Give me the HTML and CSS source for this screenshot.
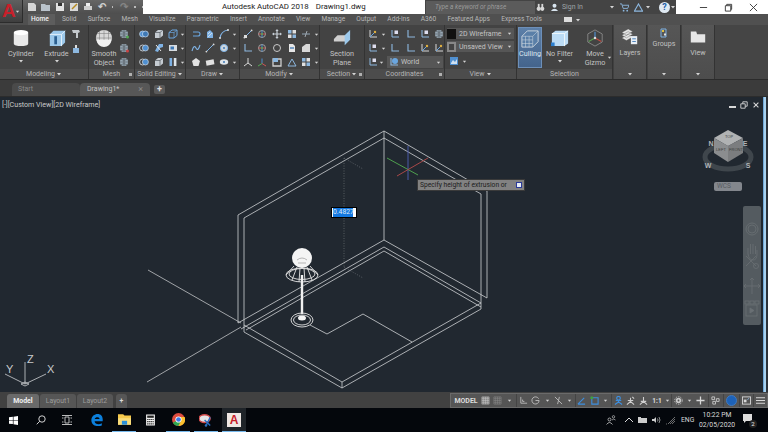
FILE: index.html
```html
<!DOCTYPE html>
<html lang="en">
<head>
<meta charset="utf-8">
<title>Autodesk AutoCAD 2018</title>
<link rel="stylesheet" href="styles.css">
</head>
<body>
<svg class="defs" width="0" height="0">
  <symbol id="globe" viewBox="0 0 10 10"><circle cx="5" cy="5" r="4" fill="#9fb0bd"/><path d="M1 5h8M5 1v8M2 2.5q3 1.5 6 0M2 7.5q3-1.5 6 0" stroke="#4a5158" stroke-width=".7" fill="none"/></symbol>
  <symbol id="rings" viewBox="0 0 10 10"><circle cx="3.6" cy="5" r="3" fill="#4f8fd0" stroke="#cfe0f0" stroke-width=".7"/><circle cx="6.4" cy="5" r="3" fill="#3f79b5" stroke="#cfe0f0" stroke-width=".7"/></symbol>
  <symbol id="ringsw" viewBox="0 0 10 10"><circle cx="3.6" cy="5" r="3" fill="none" stroke="#cfd6dc" stroke-width=".9"/><circle cx="6.4" cy="5" r="3" fill="#4f8fd0" stroke="#cfd6dc" stroke-width=".7"/></symbol>
  <symbol id="cube" viewBox="0 0 10 10"><path d="M1 3.5 4 1h5v5.5L6 9H1z" fill="#c6ccd2"/><path d="M1 3.5h5V9M6 3.5 9 1" stroke="#3d4348" stroke-width=".6" fill="none"/></symbol>
  <symbol id="cubeb" viewBox="0 0 10 10"><path d="M1 3.5 4 1h5v5.5L6 9H1z" fill="none" stroke="#6aa6e0"/><path d="M1 3.5h5V9M6 3.5 9 1" stroke="#6aa6e0" stroke-width=".7" fill="none"/></symbol>
  <symbol id="tool" viewBox="0 0 10 10"><path d="M5 1h4v3L6 5 4 9 1 8l2-4z" fill="#7fb2e4"/><path d="M2 2l5 6" stroke="#e8e8e8"/></symbol>
  <symbol id="panel" viewBox="0 0 10 10"><rect x="1" y="2" width="8" height="6" fill="#d8dde2"/><rect x="2.5" y="3.5" width="3.5" height="3" fill="#3f79b5"/></symbol>
  <symbol id="bars" viewBox="0 0 10 10"><rect x="1.5" y="1" width="2.6" height="8" fill="#7fb2e4"/><rect x="5.8" y="1" width="2.6" height="8" fill="#dfe5ea"/></symbol>
  <symbol id="chev" viewBox="0 0 10 10"><path d="M2 3h5a2 2 0 0 1 0 4H2" fill="none" stroke="#6aa6e0" stroke-width="1.1"/></symbol>
  <symbol id="hatch" viewBox="0 0 10 10"><path d="M2 9V3l3-2 3 3v5z" fill="#7fb2e4"/><path d="M3 8l4-4M3 5l2-2" stroke="#eee" stroke-width=".7"/></symbol>
  <symbol id="arc" viewBox="0 0 10 10"><path d="M1 9Q2 2 9 1" fill="none" stroke="#7fb2e4" stroke-width="1.1"/><circle cx="1" cy="9" r="1" fill="#ddd"/><circle cx="9" cy="1" r="1" fill="#ddd"/></symbol>
  <symbol id="spline" viewBox="0 0 10 10"><path d="M1 8Q3 1 5 5T9 2" fill="none" stroke="#7fb2e4" stroke-width="1.1"/></symbol>
  <symbol id="line" viewBox="0 0 10 10"><path d="M1 9 9 1" stroke="#7fb2e4" stroke-width="1"/><circle cx="1.4" cy="8.6" r=".9" fill="#ddd"/><circle cx="8.6" cy="1.4" r=".9" fill="#ddd"/></symbol>
  <symbol id="circ" viewBox="0 0 10 10"><circle cx="5" cy="5" r="3.6" fill="#cdd6dd" stroke="#7fb2e4"/><circle cx="5" cy="5" r="1" fill="#3f79b5"/></symbol>
  <symbol id="pent" viewBox="0 0 10 10"><path d="M5 1l4 3-1.5 5h-5L1 4z" fill="#e2e2e2"/></symbol>
  <symbol id="rect" viewBox="0 0 10 10"><path d="M1 3h8v5H1z" fill="#e2e2e2" transform="rotate(-10 5 5)"/></symbol>
  <symbol id="ell" viewBox="0 0 10 10"><ellipse cx="5" cy="5" rx="4.2" ry="2.8" fill="#dfe5ea"/><circle cx="5" cy="5" r="1" fill="#3f79b5"/></symbol>
  <symbol id="move" viewBox="0 0 10 10"><path d="M5 0l1.600 2H5.600v2.400H8V3.400L10 5 8 6.600v-1H5.600V8h1L5 10 3.400 8h1V5.600H2v1L0 5l2-1.600v1h2.400V2h-1z" fill="#c8d0d8"/></symbol>
  <symbol id="gizmo" viewBox="0 0 10 10"><circle cx="5" cy="5" r="3.500" fill="none" stroke="#a0a0a0"/><path d="M5 1.500v7" stroke="#4f8fd0"/><path d="M1.500 5h7" stroke="#c55"/><circle cx="5" cy="5" r="1" fill="#5a5"/></symbol>
  <symbol id="dash" viewBox="0 0 10 10"><path d="M1 5h8" stroke="#7b8a96" stroke-width="1.400"/><path d="M6 2 4 8" stroke="#a0a8b0"/></symbol>
  <symbol id="doc" viewBox="0 0 10 10"><path d="M2 1h4l2 2v6H2z" fill="#e6e6e6"/><path d="M3 5h4" stroke="#3f79b5" stroke-width="1.300"/></symbol>
  <symbol id="tile" viewBox="0 0 10 10"><rect x="1" y="1" width="3.500" height="3.500" fill="#8db8e0"/><rect x="5.500" y="1" width="3.500" height="3.500" fill="#e0e0e0"/><rect x="1" y="5.500" width="3.500" height="3.500" fill="#e0e0e0"/><rect x="5.500" y="5.500" width="3.500" height="3.500" fill="#8db8e0"/></symbol>
  <symbol id="ucs" viewBox="0 0 10 10"><path d="M2 1v7h7" fill="none" stroke="#d8d8d8"/><path d="M2 8 7 3" stroke="#6aa6e0"/><circle cx="7" cy="3" r="1.200" fill="#e0b040"/></symbol>
  <symbol id="ucsb" viewBox="0 0 10 10"><path d="M2 1v7h7" fill="none" stroke="#8db8e0" stroke-width="1.100"/></symbol>
  <symbol id="ucsd" viewBox="0 0 10 10"><path d="M2 1v7h7" fill="none" stroke="#8db8e0"/><rect x="4.500" y="1.500" width="3.500" height="3.500" fill="#dde"/></symbol>
  <symbol id="caret" viewBox="0 0 6 6"><path d="M1 2h4L3 4.500z" fill="#d5d5d5"/></symbol>
</svg>

<div class="app">
  <div class="titlebar">
    <div class="qat">
      <svg class="qat-ico" viewBox="0 0 10 10"><path d="M1 1h6l2 2v6H1z" fill="#d6d6d6"/></svg>
      <svg class="qat-ico" viewBox="0 0 10 10"><path d="M0 2h4l1 1h4v6H0z" fill="#b9c2ca"/></svg>
      <svg class="qat-ico" viewBox="0 0 10 10"><path d="M1 1h8v8H1z" fill="#e2e2e2"/><rect x="3" y="1" width="4" height="3" fill="#333"/></svg>
      <svg class="qat-ico" viewBox="0 0 10 10"><path d="M1 1h8v8H1z" fill="#d9d9d9"/><path d="M3 7l5-5" stroke="#b58a20" stroke-width="1.500"/></svg>
      <svg class="qat-ico" viewBox="0 0 10 10"><path d="M1 4h8v4H1z" fill="#cfcfcf"/><path d="M3 1h4v3H3z" fill="#eee"/></svg>
      <span class="undo">↶</span><span class="dot"></span><span class="undo dim">↷</span><span class="dot"></span><span class="dot"></span>
    </div>
    <div class="title"><span>Autodesk AutoCAD 2018</span><span>Drawing1.dwg</span></div>
    <div class="online">
      <span class="searchbox">Type a keyword or phrase</span>
      <svg class="ol-ico o-bin" viewBox="0 0 10 10"><circle cx="3" cy="6.500" r="2.300" fill="#d8d8d8"/><circle cx="7" cy="6.500" r="2.300" fill="#d8d8d8"/><rect x="2" y="1" width="2" height="4" fill="#d8d8d8"/><rect x="6" y="1" width="2" height="4" fill="#d8d8d8"/></svg>
      <svg class="ol-ico o-user" viewBox="0 0 10 10"><circle cx="5" cy="3" r="2.200" fill="#d8e4ee"/><path d="M1 9q4-5 8 0z" fill="#d8e4ee"/></svg>
      <span class="signin">Sign In</span>
      <svg class="caret c-signin" viewBox="0 0 6 6"><use href="#caret"/></svg>
      <svg class="ol-ico o-cart" viewBox="0 0 10 10"><path d="M0 1h2l1.500 5h5L10 2.500H3" fill="none" stroke="#8db8e0"/><circle cx="4" cy="8.500" r="1" fill="#8db8e0"/><circle cx="8" cy="8.500" r="1" fill="#8db8e0"/></svg>
      <svg class="ol-ico o-tri" viewBox="0 0 10 10"><path d="M5 1 9.500 9H.5z" fill="none" stroke="#8db8e0" stroke-width="1.200"/></svg>
      <svg class="caret c-tri" viewBox="0 0 6 6"><use href="#caret"/></svg>
      <span class="help">?</span>
      <svg class="caret c-help" viewBox="0 0 6 6"><use href="#caret"/></svg>
    </div>
    <div class="winbtns">
      <svg viewBox="0 0 10 10"><path d="M1 5h8" stroke="#333"/></svg>
      <svg viewBox="0 0 10 10"><path d="M1.500 3h6v6h-6zM3 3V1.500h5.500V7H7.500" fill="none" stroke="#333"/></svg>
      <svg viewBox="0 0 10 10"><path d="M1 1l8 8M9 1 1 9" stroke="#333"/></svg>
    </div>
  </div>

  <div class="appbtn">A<svg class="caret" viewBox="0 0 6 6"><use href="#caret"/></svg></div>

  <div class="tabrow">
    <span class="tab active">Home</span><span class="tab">Solid</span><span class="tab">Surface</span><span class="tab">Mesh</span><span class="tab">Visualize</span><span class="tab">Parametric</span><span class="tab">Insert</span><span class="tab">Annotate</span><span class="tab">View</span><span class="tab">Manage</span><span class="tab">Output</span><span class="tab">Add-ins</span><span class="tab">A360</span><span class="tab">Featured Apps</span><span class="tab">Express Tools</span>
    <span class="tab-ico"></span>
    <svg class="caret" viewBox="0 0 6 6"><use href="#caret"/></svg>
  </div>

  <div class="ribbon">
    <section class="panel p-model">
      <div class="pbody">
        <div class="big b-cyl">
          <svg class="bigico" viewBox="0 0 20 20"><path d="M2 4v12c0 4 16 4 16 0V4z" fill="#e9e9e9"/><ellipse cx="10" cy="4" rx="8" ry="3" fill="#fff"/></svg>
          <span>Cylinder</span><svg class="caret" viewBox="0 0 6 6"><use href="#caret"/></svg>
        </div>
        <div class="big b-ext">
          <svg class="bigico" viewBox="0 0 20 20"><path d="M2 6l4-4h13v13l-4 4H2z" fill="#9cc8ea"/><path d="M2 6h13v13M15 6l4-4" stroke="#e8f2fa" fill="none"/><rect x="7" y="8" width="3" height="9" fill="#2b5f90"/></svg>
          <span>Extrude</span><svg class="caret" viewBox="0 0 6 6"><use href="#caret"/></svg>
        </div>
        <div class="stack s-model">
          <svg viewBox="0 0 10 10"><path d="M1 1h7l1 2-2 1v5H5V4H2z" fill="#c4c8cc"/></svg>
          <svg viewBox="0 0 10 10"><path d="M2 4h6v5H2z" fill="#8db8e0"/><path d="M4 1h2v3H4z" fill="#ddd"/></svg>
        </div>
      </div>
      <div class="plabel">Modeling<svg class="caret" viewBox="0 0 6 6"><use href="#caret"/></svg></div>
    </section>

    <section class="panel p-mesh">
      <div class="pbody">
        <div class="big b-smooth">
          <svg class="bigico" viewBox="0 0 20 20"><circle cx="10" cy="10" r="9" fill="#d8d8d8"/><path d="M1 10h18M10 1v18M3 5h14M3 15h14M5 2v16M15 2v16" stroke="#7a7a7a" stroke-width=".6"/><path d="M2 12a8 8 0 0 0 16 0z" fill="#f2f2f2"/></svg>
          <span>Smooth<br>Object</span>
        </div>
        <div class="stack s-mesh">
          <svg viewBox="0 0 10 10"><use href="#globe"/><circle cx="8.500" cy="8" r="1.500" fill="#5a5"/></svg>
          <svg viewBox="0 0 10 10"><use href="#globe"/><circle cx="8.500" cy="8" r="1.500" fill="#c44"/></svg>
          <svg viewBox="0 0 10 10"><use href="#globe"/></svg>
        </div>
      </div>
      <div class="plabel">Mesh<i class="launch"></i></div>
    </section>

    <section class="panel p-solid">
      <div class="pbody">
        <div class="grid g-solid">
          <svg viewBox="0 0 10 10"><use href="#rings"/></svg><svg viewBox="0 0 10 10"><use href="#cube"/></svg><svg viewBox="0 0 10 10"><use href="#cubeb"/></svg><svg class="c" viewBox="0 0 6 6"><use href="#caret"/></svg>
          <svg viewBox="0 0 10 10"><use href="#ringsw"/></svg><svg viewBox="0 0 10 10"><use href="#tool"/></svg><svg viewBox="0 0 10 10"><use href="#panel"/></svg><svg class="c" viewBox="0 0 6 6"><use href="#caret"/></svg>
          <svg viewBox="0 0 10 10"><use href="#ringsw"/></svg><svg viewBox="0 0 10 10"><use href="#cube"/></svg><svg viewBox="0 0 10 10"><use href="#bars"/></svg><svg class="c" viewBox="0 0 6 6"><use href="#caret"/></svg>
        </div>
      </div>
      <div class="plabel">Solid Editing<svg class="caret" viewBox="0 0 6 6"><use href="#caret"/></svg></div>
    </section>

    <section class="panel p-draw">
      <div class="pbody">
        <div class="grid g-draw">
          <svg viewBox="0 0 10 10"><use href="#chev"/></svg><svg viewBox="0 0 10 10"><use href="#hatch"/></svg><svg viewBox="0 0 10 10"><use href="#arc"/></svg><svg class="c" viewBox="0 0 6 6"><use href="#caret"/></svg>
          <svg viewBox="0 0 10 10"><use href="#spline"/></svg><svg viewBox="0 0 10 10"><use href="#line"/></svg><svg viewBox="0 0 10 10"><use href="#circ"/></svg><svg class="c" viewBox="0 0 6 6"><use href="#caret"/></svg>
          <svg viewBox="0 0 10 10"><use href="#pent"/></svg><svg viewBox="0 0 10 10"><use href="#rect"/></svg><svg viewBox="0 0 10 10"><use href="#ell"/></svg><svg class="c" viewBox="0 0 6 6"><use href="#caret"/></svg>
        </div>
      </div>
      <div class="plabel">Draw<svg class="caret" viewBox="0 0 6 6"><use href="#caret"/></svg></div>
    </section>

    <section class="panel p-modify">
      <div class="pbody">
        <div class="grid g-modify">
          <svg viewBox="0 0 10 10"><use href="#line"/><rect x="1" y="6" width="3" height="3" fill="#ddd"/></svg><svg viewBox="0 0 10 10"><use href="#gizmo"/></svg><svg viewBox="0 0 10 10"><use href="#move"/></svg><svg viewBox="0 0 10 10"><use href="#tile"/></svg><svg viewBox="0 0 10 10"><use href="#dash"/></svg><svg class="c" viewBox="0 0 6 6"><use href="#caret"/></svg>
          <svg viewBox="0 0 10 10"><use href="#ucsb"/></svg><svg viewBox="0 0 10 10"><use href="#gizmo"/></svg><svg viewBox="0 0 10 10"><circle cx="5" cy="5" r="3.500" fill="none" stroke="#c8c8c8"/></svg><svg viewBox="0 0 10 10"><use href="#doc"/></svg><svg viewBox="0 0 10 10"><path d="M1 9V4l4-3h4v8z" fill="#d8d8d8"/></svg><svg class="c" viewBox="0 0 6 6"><use href="#caret"/></svg>
          <svg viewBox="0 0 10 10"><path d="M5 1v5M5 6 1 9M5 6l4 3" stroke="#d8d8d8"/></svg><svg viewBox="0 0 10 10"><path d="M5 1.500v5" stroke="#4f8fd0"/><path d="M5 6.500 1 9" stroke="#5a5"/><path d="M5 6.500 9 9" stroke="#c55"/></svg><svg viewBox="0 0 10 10"><path d="M1 2h8v7H1z" fill="none" stroke="#d0d0d0" stroke-width="1.300"/><rect x="1" y="1" width="5" height="4" fill="#8db8e0"/></svg><svg viewBox="0 0 10 10"><path d="M1 9h8L5 2z" fill="none" stroke="#8db8e0"/></svg><svg viewBox="0 0 10 10"><use href="#tile"/></svg><svg class="c" viewBox="0 0 6 6"><use href="#caret"/></svg>
        </div>
      </div>
      <div class="plabel">Modify<svg class="caret" viewBox="0 0 6 6"><use href="#caret"/></svg></div>
    </section>

    <section class="panel p-section">
      <div class="pbody">
        <div class="big b-section">
          <svg class="bigico" viewBox="0 0 20 20"><path d="M1 11l4-4h9v7H1z" fill="#cfcfcf"/><path d="M13 7l6-6v11l-6 6z" fill="#9cc8ea"/></svg>
          <span>Section<br>Plane</span>
        </div>
      </div>
      <div class="plabel">Section<svg class="caret" viewBox="0 0 6 6"><use href="#caret"/></svg><i class="launch"></i></div>
    </section>

    <section class="panel p-coord">
      <div class="pbody">
        <div class="grid g-coord">
          <svg viewBox="0 0 10 10"><use href="#ucs"/></svg><svg class="c" viewBox="0 0 6 6"><use href="#caret"/></svg><svg viewBox="0 0 10 10"><use href="#ucsd"/></svg><svg viewBox="0 0 10 10"><use href="#ucsb"/></svg><svg viewBox="0 0 10 10"><use href="#ucsd"/></svg><svg viewBox="0 0 10 10"><use href="#globe"/></svg>
          <svg viewBox="0 0 10 10"><use href="#ucsd"/></svg><svg class="c" viewBox="0 0 6 6"><use href="#caret"/></svg><svg viewBox="0 0 10 10"><use href="#ucsb"/></svg><svg viewBox="0 0 10 10"><use href="#ucsb"/></svg><svg viewBox="0 0 10 10"><use href="#ucs"/></svg><svg viewBox="0 0 10 10"><use href="#ucs"/></svg>
        </div>
        <div class="coord-last">
          <svg viewBox="0 0 10 10"><use href="#ucsd"/></svg><svg class="c" viewBox="0 0 6 6"><use href="#caret"/></svg>
          <div class="combo c-world"><svg viewBox="0 0 10 10"><use href="#ucsb"/><circle cx="6" cy="4" r="3" fill="#6aa6e0"/></svg><span>World</span><svg class="c" viewBox="0 0 6 6"><use href="#caret"/></svg></div>
        </div>
      </div>
      <div class="plabel">Coordinates<i class="launch"></i></div>
    </section>

    <section class="panel p-view">
      <div class="pbody">
        <div class="combo c-vs"><i class="swatch"></i><span>2D Wireframe</span><svg class="c" viewBox="0 0 6 6"><use href="#caret"/></svg></div>
        <div class="combo c-vs"><i class="swatch sw2"></i><span>Unsaved View</span><svg class="c" viewBox="0 0 6 6"><use href="#caret"/></svg></div>
        <div class="view-last"><svg viewBox="0 0 10 10"><rect x="1" y="1" width="8" height="8" fill="#4f8fd0"/><path d="M2 7l2-3 2 2 2-3v5H2z" fill="#cfe0f0"/></svg><svg class="c" viewBox="0 0 6 6"><use href="#caret"/></svg></div>
      </div>
      <div class="plabel">View<svg class="caret" viewBox="0 0 6 6"><use href="#caret"/></svg></div>
    </section>

    <section class="panel p-select">
      <div class="pbody">
        <div class="big b-cull">
          <svg class="bigico" viewBox="0 0 20 20"><path d="M1 7l6-6h12v12l-6 6H1z" fill="#5a7fa8" stroke="#cfd8e0"/><path d="M1 7h12v12M13 7l6-6M5 7v12M9 7v12M1 11h12M1 15h12" stroke="#cfd8e0" stroke-width=".6" fill="none"/></svg>
          <span>Culling</span>
        </div>
        <div class="big b-filter">
          <svg class="bigico" viewBox="0 0 20 20"><path d="M1 5l4-3h14v14l-4 3H1z" fill="#bcdcf5"/><path d="M1 5h14v14M15 5l4-3" stroke="#f2f8fc" fill="none"/><rect x="0" y="15" width="4" height="4" fill="#2b7fd0"/></svg>
          <span>No Filter</span><svg class="caret" viewBox="0 0 6 6"><use href="#caret"/></svg>
        </div>
        <div class="big b-gizmo">
          <svg class="bigico" viewBox="0 0 20 20"><path d="M10 1l8 4.500v9L10 19l-8-4.500v-9z" fill="none" stroke="#8a8a8a"/><path d="M10 10V3" stroke="#4f8fd0" stroke-width="1.300"/><path d="M10 10 3 14" stroke="#5a9a50" stroke-width="1.300"/><path d="M10 10l7 4" stroke="#c04a40" stroke-width="1.300"/><circle cx="10" cy="10" r="1.400" fill="#ddd"/></svg>
          <span>Move<br>Gizmo</span>
        </div>
        <svg class="c gizmo-caret" viewBox="0 0 6 6"><use href="#caret"/></svg>
      </div>
      <div class="plabel">Selection</div>
    </section>

    <section class="mini m-layers">
      <svg class="miniico" viewBox="0 0 20 20"><path d="M1 5 8 1l5 3-7 4zM1 8l7-4 5 3-7 4zM1 11l7-4 5 3-7 4z" fill="#e4e4e4" stroke="#555" stroke-width=".4"/><rect x="11" y="9" width="7" height="9" fill="#e8eef4"/><path d="M12.500 12h4M12.500 15h4" stroke="#3f79b5"/></svg>
      <span>Layers</span><svg class="caret" viewBox="0 0 6 6"><use href="#caret"/></svg>
    </section>
    <section class="mini m-groups">
      <svg class="miniico small" viewBox="0 0 10 10"><path d="M2 1h5v8H2z" fill="none" stroke="#7fb2e4"/><rect x="3" y="2" width="2" height="2" fill="#e0c040"/><rect x="5" y="5.500" width="2" height="2" fill="#e0e0e0"/></svg>
      <span>Groups</span><svg class="caret" viewBox="0 0 6 6"><use href="#caret"/></svg>
    </section>
    <section class="mini m-view">
      <svg class="miniico" viewBox="0 0 20 20"><path d="M2 4h6l1 3h9v9H2z" fill="#e6e6e6"/></svg>
      <span>View</span><svg class="caret" viewBox="0 0 6 6"><use href="#caret"/></svg>
    </section>
    <div class="ribbon-rest"></div>
  </div>

  <div class="doctabs">
    <span class="doctab start">Start</span>
    <span class="doctab cur">Drawing1*<b>×</b></span>
    <span class="addtab">+</span>
  </div>

  <main class="viewport">
    <div class="vlabel">[-][Custom View][2D Wireframe]</div>
    <svg class="scene" viewBox="0 97 768 295">
      <g class="wire">
        <path d="M384 131 238 215V323M384 138 244 218V332M384 131V240M384 131 487 191V298M384 138 481 194V309"/>
        <path d="M384 240 238 323M384 247 241 329M384 251 246 330M384 240 487 298M384 247 481 303M384 251 481 307"/>
        <path d="M244 325 342 382 481 303M244 332 342 388 481 309M342 382V388"/>
        <path d="M310 325 327 334 363 314 412 342"/>
      </g>
      <g class="axisline">
        <path d="M148 270 241 323M147 382 241 327"/>
      </g>
      <path class="dim" d="M344 158V267M344 158 363 169M344 267 363 278"/>
      <path class="ax-b" d="M408 146V180"/>
      <path class="ax-g" d="M387 158 418 175"/>
      <path class="ax-r" d="M397 176 428 158"/>
      <g class="lamp">
        <ellipse cx="302" cy="275" rx="16" ry="7"/>
        <ellipse cx="302" cy="274" rx="13" ry="5.500"/>
        <path d="M294 266 286 275M310 266 318 275M297 267 292 280M307 267 312 280M300 268 299 282M304 268 305 282"/>
        <path class="pole" d="M302 275V314"/>
        <ellipse cx="302" cy="320" rx="11" ry="7"/>
        <ellipse cx="302" cy="320" rx="8.500" ry="5"/>
        <ellipse class="solid" cx="302" cy="318" rx="4" ry="2.500"/>
        <circle class="solid" cx="302" cy="258" r="10"/>
        <path class="lampmark" d="M297 260q5-4 10 0M298 263h8"/>
      </g>
      <g class="ucsicon">
        <path d="M25 384V362M25 384 5 374M25 384 46 374M21 384l4-2 4 2-4 2z"/>
      </g>
      <text class="ucslabel" x="27" y="363">Z</text>
      <text class="ucslabel" x="6" y="373">Y</text>
      <text class="ucslabel" x="47" y="373">X</text>
      <ellipse class="ring" cx="728" cy="157" rx="23" ry="12"/>
      <path class="cube-top" d="M728 130 743 138 728 146 714 138z"/>
      <path class="cube-l" d="M714 138 728 146V162L714 153z"/>
      <path class="cube-r" d="M743 138 728 146V162L743 153z"/>
      <text class="cubelabel" x="729" y="138">TOP</text>
      <text class="cubelabel" x="721" y="151">LEFT</text>
      <text class="cubelabel" x="736" y="151">FRONT</text>
      <text class="compass" x="708" y="168">W</text>
      <text class="compass" x="748" y="168">S</text>
      <text class="compass" x="711" y="146">N</text>
      <text class="compass" x="745" y="146">E</text>
    </svg>

    <div class="inputbox"><span>0.4827</span></div>
    <div class="tooltip"><span>Specify height of extrusion or</span><i></i></div>

    <div class="vpctl">
      <i class="v-min"></i>
      <svg viewBox="0 0 10 10"><path d="M1 3.500h5.500V9H1zM3.500 3.500V1H9v5.500H6.500" fill="none" stroke="#d8d8d8" stroke-width="1.100"/></svg>
      <svg viewBox="0 0 10 10"><path d="M2 2l6 6M8 2 2 8" stroke="#d8d8d8" stroke-width="1.300"/></svg>
    </div>

    <div class="wcs">WCS</div>

    <div class="navbar">
      <svg viewBox="0 0 18 119">
        <g class="navg">
          <circle cx="9" cy="23" r="6"/><circle cx="9" cy="23" r="4"/>
          <path d="M5 48V42M7.500 48V38M10 48V38M12.500 48V40M5 48q1 6 5 6t4-6v-4"/>
          <path d="M3 50l10 10M13 50 3 60"/><circle cx="13" cy="60" r="2.500"/>
          <path d="M9 72v16M1 80h16M9 72l-2 2M9 72l2 2M1 80l2-2M1 80l2 2M17 80l-2-2M17 80l-2 2"/>
          <rect x="2" y="95" width="4" height="3"/><rect x="7" y="95" width="4" height="3"/><rect x="12" y="95" width="4" height="3"/><rect x="3" y="99" width="11" height="11"/>
          <path class="navfill" d="M7 102v5l4-2.500z"/>
        </g>
      </svg>
    </div>
    <div class="scrollstrip"></div>
  </main>

  <div class="bottombar">
    <div class="layouts">
      <span class="ltab on">Model</span><span class="ltab">Layout1</span><span class="ltab">Layout2</span><span class="ltab plus">+</span>
    </div>
    <div class="status">
      <span class="model">MODEL</span>
      <svg viewBox="0 0 10 10"><path d="M1 1h8v8H1zM3 1v8M5 1v8M7 1v8M1 3h8M1 5h8M1 7h8" fill="#7b7b7b" stroke="#c8c8c8" stroke-width=".6"/></svg>
      <svg viewBox="0 0 10 10"><path d="M1 1h8v8H1zM3 1v8M5 1v8M7 1v8M1 3h8M1 5h8M1 7h8" fill="none" stroke="#8a8a8a" stroke-width=".6"/></svg>
      <svg class="c" viewBox="0 0 6 6"><use href="#caret"/></svg><u></u>
      <svg viewBox="0 0 10 10"><path d="M2 1v7h7M4 6V4M4 6h2" fill="none" stroke="#bdbdbd"/></svg>
      <svg viewBox="0 0 10 10"><path d="M8.500 3A4 4 0 1 0 9 5H5" fill="none" stroke="#bdbdbd"/></svg>
      <svg class="c" viewBox="0 0 6 6"><use href="#caret"/></svg>
      <svg viewBox="0 0 10 10"><path d="M1 1l8 8M6 1 4 9" stroke="#bdbdbd"/></svg>
      <svg class="c" viewBox="0 0 6 6"><use href="#caret"/></svg><u></u>
      <svg viewBox="0 0 10 10"><path d="M1 9 8 2M1 9h8" stroke="#3d8fe0" stroke-width="1.200"/></svg>
      <svg viewBox="0 0 10 10"><path d="M2 2h7v7H2z" fill="none" stroke="#3d8fe0" stroke-width="1.200"/><circle cx="2" cy="2" r="1.700" fill="#3fa040"/></svg>
      <svg class="c" viewBox="0 0 6 6"><use href="#caret"/></svg><u></u>
      <svg viewBox="0 0 10 10"><circle cx="5" cy="2.500" r="2" fill="none" stroke="#3d8fe0" stroke-width="1.300"/><path d="M5 4.500v2L1 9.500M5 6.500l4 3M2 5h6" stroke="#3d8fe0" stroke-width="1.300" fill="none"/></svg>
      <svg viewBox="0 0 10 10"><path d="M5 2v4L1 9.500M5 6l4 3.500M2 5h6M7 1l2 2" stroke="#cfcfcf" stroke-width="1.200" fill="none"/></svg>
      <svg viewBox="0 0 10 10"><path d="M5 1v5L1 9.500M5 6l4 3.500M2 6h6" stroke="#cfcfcf" stroke-width="1.200" fill="none"/></svg>
      <span class="scale">1:1</span>
      <svg class="c" viewBox="0 0 6 6"><use href="#caret"/></svg><u></u>
      <svg viewBox="0 0 10 10"><circle cx="5" cy="5" r="3" fill="#c8c8c8"/><circle cx="5" cy="5" r="4.200" fill="none" stroke="#c8c8c8" stroke-dasharray="1.500 1.200"/><circle cx="5" cy="5" r="1" fill="#555"/></svg>
      <svg class="c" viewBox="0 0 6 6"><use href="#caret"/></svg>
      <svg viewBox="0 0 10 10"><path d="M5 .5v9M.5 5h9" stroke="#d8d8d8" stroke-width="1.400"/></svg><u></u>
      <svg viewBox="0 0 10 10"><path d="M1 1h3v3H1zM6 3h3v3H6zM2 6h3v3H2z" fill="none" stroke="#c8c8c8"/></svg><u></u>
      <span class="isolate"></span><u></u>
      <svg viewBox="0 0 10 10"><rect x=".5" y="1" width="9" height="8" fill="none" stroke="#d8d8d8"/><rect x="2" y="4" width="3" height="3" fill="#d8d8d8"/><path d="M6 4l2-1.500" stroke="#8db8e0"/></svg><u></u>
      <svg viewBox="0 0 10 10"><path d="M0 2h10M0 5h10M0 8h10" stroke="#d8d8d8" stroke-width="1.200"/></svg>
    </div>
  </div>

  <footer class="taskbar">
    <svg class="tb t-win" viewBox="0 0 10 10"><path d="M0 1.500 4.300.9v3.700H0zM5 .8 10 0v4.600H5zM0 5.300h4.300V9L0 8.500zM5 5.300h5V10L5 9.200z" fill="#fff"/></svg>
    <svg class="tb t-search" viewBox="0 0 10 10"><circle cx="6" cy="4" r="3.200" fill="none" stroke="#e8e8e8" stroke-width=".9"/><path d="M3.700 6.300 .7 9.300" stroke="#e8e8e8" stroke-width=".9"/></svg>
    <svg class="tb t-view" viewBox="0 0 10 10"><path d="M3 2h4v6H3zM0 3h1.500M0 7h1.500M8.500 3H10M8.500 7H10M0 .5h10M0 9.500h10" fill="none" stroke="#e8e8e8" stroke-width=".8"/></svg>
    <svg class="tb t-edge" viewBox="0 0 10 10"><path d="M9.700 6H3c.2 2.500 3.300 3.300 6 1.800v1.800C5.500 11 .2 9.700.3 5 .4 1.800 3 0 5.500 0 8.500 0 10.200 2.300 9.700 6zM3.100 4.200h4c0-1.900-3.500-2.100-4 0z" fill="#0c7fdc"/></svg>
    <div class="pinned p-folder"><svg viewBox="0 0 10 10"><path d="M0 1h4l1 1h5v7H0z" fill="#f6c94c"/><path d="M0 4h10v5H0z" fill="#f9dc7a"/><path d="M3 6h4v3H3z" fill="#2a8fd8"/></svg></div>
    <svg class="tb t-calc" viewBox="0 0 10 10"><rect x="1" y="0" width="8" height="10" fill="#f1f1f1"/><rect x="2" y="1" width="6" height="2" fill="#222"/><path d="M2 4.500h6M2 6.500h6M2 8.500h6" stroke="#222" stroke-dasharray="1.200 .6"/></svg>
    <div class="pinned p-chrome"><svg viewBox="0 0 10 10"><circle cx="5" cy="5" r="5" fill="#dd4b3e"/><path d="M5 5 .7 7.500A5 5 0 0 0 5 10l2.300-4z" fill="#2fa84f"/><path d="M5 3h4.700A5 5 0 0 1 5 10l2-4z" fill="#fbc02d"/><circle cx="5" cy="5" r="2.400" fill="#fff"/><circle cx="5" cy="5" r="1.800" fill="#3b78e7"/></svg></div>
    <div class="pinned p-snip"><svg viewBox="0 0 10 10"><ellipse cx="4" cy="4" rx="4" ry="2.800" fill="#e5e5e5" stroke="#d04848"/><path d="M4 5 8 9M8 3 5 9" stroke="#2a6fc0"/><circle cx="5" cy="9" r=".9" fill="#2a6fc0"/></svg></div>
    <div class="t-acad"><span>A</span></div>
    <div class="tray">
      <svg class="tr r-ppl" viewBox="0 0 10 10"><circle cx="3.500" cy="4.500" r="1.500" fill="none" stroke="#ddd" stroke-width=".7"/><path d="M.5 9.500q3-4 6 0" fill="none" stroke="#ddd" stroke-width=".7"/><circle cx="7.500" cy="1.800" r="1.200" fill="none" stroke="#ddd" stroke-width=".6"/><path d="M6 5q1.500-1.800 3.500 0" fill="none" stroke="#ddd" stroke-width=".6"/></svg>
      <svg class="tr r-up" viewBox="0 0 10 10"><path d="M1 7l4-4 4 4" fill="none" stroke="#ddd"/></svg>
      <svg class="tr r-bat" viewBox="0 0 10 10"><rect x="0" y="3" width="9" height="5" fill="#ccc"/><rect x="0" y="2" width="3" height="1" fill="#ccc"/></svg>
      <svg class="tr r-vol" viewBox="0 0 10 10"><path d="M0 4h2l2-2v6L2 6H0z" fill="#ccc"/><path d="M5.500 3.500q1 1.500 0 3M7 2q2 3 0 6" fill="none" stroke="#ccc" stroke-width=".7"/></svg>
      <svg class="tr r-net" viewBox="0 0 10 10"><path d="M0 9h1M2 9 9 2M4 9l5-5M6 9l3-3" stroke="#999" stroke-width=".7"/></svg>
      <span class="eng">ENG</span>
      <div class="clock"><span>10:22 PM</span><span>02/05/2020</span></div>
      <div class="notif"><svg viewBox="0 0 10 10"><path d="M0 0h9v7H3L1 9V7H0z" fill="#ddd"/></svg><b>2</b></div>
    </div>
  </footer>
</div>
</body>
</html>
```

FILE: styles.css
```css
* { box-sizing: border-box; }
html, body { margin: 0; padding: 0; width: 768px; height: 432px; overflow: hidden; background: #000; }
body { font-family: Roboto, "Open Sans", "Liberation Sans", sans-serif; font-size: 7px; color: #c9c9c9; }
.defs { position: absolute; }
svg { display: block; flex: none; }
.app { position: relative; width: 768px; height: 432px; display: flex; flex-direction: column; }

/* title bar */
.titlebar { height: 14px; display: flex; background: #4a4a4a; }
.qat { width: 143px; padding-left: 27px; display: flex; align-items: center; gap: 4px; background: linear-gradient(#666, #4e4e4e); }
.qat-ico { width: 10px; height: 10px; }
.undo { font-size: 10px; line-height: 10px; color: #cfcfcf; font-weight: 700; margin-left: 1px; }
.undo.dim { color: #858585; margin-left: 3px; }
.dot { width: 2px; height: 2px; background: #bbb; margin-left: 2px; }
.title { width: 282px; background: #fff; color: #222; font-size: 7.900px; line-height: 14px; padding-left: 79px; display: flex; gap: 7px; white-space: nowrap; }
.online { width: 251px; display: flex; align-items: center; background: #444; }
.searchbox { width: 109px; margin-left: 1px; padding-left: 9px; font-style: italic; color: #9a9a9a; background: #5b5b5b; line-height: 13px; font-size: 6.500px; white-space: nowrap; }
.ol-ico { width: 9px; height: 9px; }
.o-bin { margin-left: 1px; }
.o-user { margin-left: 5px; }
.signin { margin-left: 3px; width: 44px; color: #9fa4a8; font-size: 6.900px; }
.c-signin { margin-left: 3px; }
.o-cart { margin-left: 5px; }
.o-tri { margin-left: 5px; }
.c-tri { margin-left: 2px; }
.help { width: 11px; height: 11px; border-radius: 50%; background: #dfe9f2; color: #1d5fa8; font-weight: 700; font-size: 9px; line-height: 11px; text-align: center; margin-left: 8px; flex: none; }
.caret { width: 6px; height: 6px; }
.winbtns { width: 92px; background: #fff; display: flex; align-items: center; gap: 16px; padding-left: 23px; }
.winbtns svg { width: 9px; height: 9px; }

.appbtn { position: absolute; left: 0; top: 0; width: 23px; height: 23px; background: linear-gradient(#5f5f5f, #3e3e3e); color: #c8202a; font: 700 19px/22px "Liberation Sans", sans-serif; padding-left: 2px; border-right: 1px solid #2c2c2c; border-bottom: 1px solid #2c2c2c; display: flex; align-items: center; }
.appbtn .caret { width: 5px; height: 5px; margin-left: -1px; }

/* ribbon tabs */
.tabrow { height: 11px; background: #505050; padding-left: 28px; display: flex; align-items: center; gap: 11.200px; font-size: 6.600px; color: #b9b9b9; white-space: nowrap; line-height: 11px; }
.tab.active { background: #5d5d5d; color: #f0f0f0; font-weight: 500; padding: 0 6px 0 3px; margin-right: -4px; }
.tab-ico { width: 8px; height: 5px; background: #ddd; margin-left: 11px; }
.tabrow .caret { margin-left: -8px; }

/* ribbon */
.ribbon { height: 55px; display: flex; background: #404040; border-bottom: 1px solid #2b2b2b; }
.panel { display: flex; flex-direction: column; border-right: 1px solid #333; background: #434343; }
.pbody { flex: 1; min-height: 0; display: flex; }
.plabel { height: 10px; background: #4c4c4c; display: flex; align-items: center; justify-content: center; gap: 1px; font-size: 7px; line-height: 10px; color: #b5b5b5; white-space: nowrap; position: relative; }
.launch { position: absolute; right: 2px; top: 4px; width: 3px; height: 3px; background: #b0b0b0; }
.big { display: flex; flex-direction: column; align-items: center; font-size: 7.200px; line-height: 9px; text-align: center; color: #c4c4c4; padding-top: 4px; white-space: nowrap; }
.bigico { width: 18px; height: 18px; margin-bottom: 2px; }

.p-model { width: 89px; }
.b-cyl { width: 40px; padding-left: 2px; }
.b-ext { width: 33px; }
.stack { display: flex; flex-direction: column; }
.stack svg { width: 10px; height: 10px; }
.s-model { gap: 5px; padding-top: 4px; margin-left: -2px; }
.p-mesh { width: 46px; }
.b-smooth { width: 30px; }
.s-mesh { gap: 4px; padding-top: 4px; }
.p-solid { width: 51px; }
.grid { display: grid; align-items: center; justify-items: center; }
.grid svg { width: 10px; height: 10px; }
.grid svg.c, .c { width: 5px; height: 5px; }
.g-solid { grid-template-columns: 15px 15px 13px 6px; grid-auto-rows: 14px; padding: 2px 0 0 1px; }
.p-draw { width: 54px; }
.g-draw { grid-template-columns: 14px 14px 14px 6px; grid-auto-rows: 14px; padding: 2px 0 0 3px; }
.p-modify { width: 80px; }
.g-modify { grid-template-columns: 13px 16px 14px 15px 14px 6px; grid-auto-rows: 14px; padding: 2px 0 0 1px; }
.p-section { width: 45px; }
.b-section { width: 45px; }
.p-coord { width: 80px; display: flex; }
.p-coord .pbody { flex-direction: column; }
.g-coord { grid-template-columns: 12px 8px 16px 15px 14px 14px; grid-auto-rows: 14px; padding: 2px 0 0 2px; }
.coord-last { display: flex; align-items: center; padding-left: 3px; height: 14px; }
.coord-last > svg { width: 10px; height: 10px; }
.coord-last > .c { width: 5px; height: 5px; margin: 0 3px 0 1px; }
.combo { display: flex; align-items: center; background: #565656; font-size: 7px; color: #c4c4c4; white-space: nowrap; }
.combo span { flex: 1; }
.c-world { width: 56px; height: 12px; padding: 0 2px; gap: 2px; }
.c-world svg:first-child { width: 10px; height: 10px; }
.p-view { width: 72px; }
.p-view .pbody { flex-direction: column; padding: 3px 0 0 2px; gap: 2px; }
.c-vs { width: 67px; height: 11px; gap: 3px; padding-right: 2px; }
.swatch { width: 9px; height: 10px; background: #111; flex: none; }
.sw2 { background: #444; border: 2px solid #888; }
.view-last { display: flex; align-items: center; gap: 3px; padding: 2px 0 0 2px; }
.view-last svg:first-child { width: 10px; height: 10px; }
.p-select { width: 96px; }
.b-cull { width: 24px; height: 41px; background: linear-gradient(#5c7fa8, #44648c); border: 1px solid #6d8fb8; color: #dfe8f0; margin: 2px 0 0 1px; padding-top: 2px; }
.b-cull .bigico { margin-bottom: 1px; }
.b-filter { width: 35px; }
.b-gizmo { width: 32px; margin-left: 2px; }
.gizmo-caret { margin: 30px 0 0 -4px; }

.mini { width: 33px; background: linear-gradient(#565656, #4d4d4d); border-right: 1px solid #333; margin-left: 1px; display: flex; flex-direction: column; align-items: center; font-size: 7.100px; line-height: 9px; color: #c0c0c0; padding-top: 3px; }
.miniico { width: 18px; height: 18px; margin-bottom: 2px; }
.miniico.small { width: 10px; height: 10px; margin-bottom: 1px; }
.mini .caret { margin: auto 0 2px; }
.ribbon-rest { flex: 1; background: #454545; }

/* document tabs */
.doctabs { height: 17px; background: #3b3b3b; padding: 3px 0 0 12px; display: flex; align-items: flex-end; font-size: 7px; border-bottom: 1px solid #2c2c2c; }
.doctab { height: 13px; line-height: 13px; border-radius: 4px 4px 0 0; white-space: nowrap; }
.start { width: 68px; background: #4a4a4a; color: #8b8b8b; padding-left: 6px; }
.cur { width: 70px; background: #575757; color: #c4c4c4; padding-left: 7px; display: flex; justify-content: space-between; padding-right: 7px; }
.cur b { font-weight: 400; color: #8b8b8b; font-size: 9px; }
.addtab { width: 11px; height: 9px; margin: 0 0 2px 4px; background: #5a5a5a; color: #ddd; line-height: 9px; text-align: center; font-size: 9px; font-weight: 700; border-radius: 2px; }

/* viewport */
.viewport { position: relative; height: 295px; background: #212830; overflow: hidden; }
.vlabel { padding: 3px 0 0 2px; font-size: 7.100px; line-height: 10px; color: #c8c8c8; white-space: nowrap; }
.scene { position: absolute; left: 0; top: 0; width: 768px; height: 295px; }
.wire path { fill: none; stroke: #cfd2d4; stroke-width: .8; }
.axisline path { fill: none; stroke: #c0c3c5; stroke-width: .8; }
.dim { fill: none; stroke: #7a7f84; stroke-width: .6; stroke-dasharray: 1 1.500; }
.ax-b { stroke: #4a5aa8; stroke-width: 1; }
.ax-g { stroke: #4ea04e; stroke-width: 1; }
.ax-r { stroke: #a84848; stroke-width: 1; }
.lamp ellipse, .lamp path { fill: none; stroke: #e4e4e4; stroke-width: .9; }
.lamp .pole { stroke-width: 2.400; stroke: #f0f0f0; }
.lamp .solid { fill: #f4f4f4; stroke: none; }
.lamp .lampmark { stroke: #9a9a9a; stroke-width: .7; }
.ucsicon path { fill: none; stroke: #cfd2d4; stroke-width: .8; }
.ucslabel { font: 11px "Liberation Sans", sans-serif; fill: #c8cbcd; }
.ring { fill: none; stroke: #3f464c; stroke-width: 5; }
.cube-top { fill: #b0b2b3; }
.cube-l { fill: #8b8d8f; }
.cube-r { fill: #7b7d7f; }
.cubelabel { font: 4px "Liberation Sans", sans-serif; fill: #3d3d3d; text-anchor: middle; }
.compass { font: 700 7px "Liberation Sans", sans-serif; fill: #b0b4b7; text-anchor: middle; }

.inputbox { position: absolute; left: 331px; top: 110px; width: 26px; height: 11px; background: #fff; border: 1px solid #000; font-size: 6.800px; line-height: 9px; padding-left: 1px; white-space: nowrap; }
.inputbox span { display: block; width: 20px; background: #1478e0; color: #dce8f8; }
.tooltip { position: absolute; left: 417px; top: 82px; width: 108px; height: 12px; background: #828282; border: 1px solid #3a3a3a; color: #1d1d1d; font-size: 6.700px; line-height: 10px; padding-left: 2px; display: flex; justify-content: space-between; align-items: center; white-space: nowrap; }
.tooltip i { width: 6px; height: 6px; background: #e8eef8; border: 1px solid #2a3a9a; margin-right: 2px; }
.vpctl { position: absolute; right: 8px; top: 4px; display: flex; align-items: center; gap: 4px; }
.vpctl svg { width: 8px; height: 8px; }
.v-min { width: 7px; height: 2px; background: #d8d8d8; margin-top: 4px; }
.wcs { position: absolute; left: 714px; top: 85px; width: 28px; height: 9px; background: #83878d; border-radius: 2px; color: #565a60; font-size: 6.500px; line-height: 9px; padding-left: 3px; }
.navbar { position: absolute; left: 743px; top: 109px; width: 18px; height: 119px; background: #545b60; border-radius: 2px; }
.navbar svg { width: 18px; height: 119px; }
.navg * { fill: none; stroke: #6a7074; stroke-width: .8; }
.navg .navfill { fill: #6a7074; }
.scrollstrip { position: absolute; right: 0; top: 0; bottom: 0; width: 5px; background: #a9d2ef; border-left: 1px solid #6fa8d8; border-right: 2px solid #2b3138; }

/* bottom bar */
.bottombar { height: 16px; background: #414141; display: flex; justify-content: space-between; }
.layouts { display: flex; align-items: flex-end; padding-left: 7px; gap: 1px; font-size: 6.900px; }
.ltab { height: 14px; line-height: 14px; width: 36px; text-align: center; background: #565656; color: #9c9c9c; border-radius: 3px 3px 0 0; }
.ltab.on { background: #6a6a6a; color: #f0f0f0; font-weight: 700; width: 32px; }
.ltab.plus { width: 11px; color: #ddd; font-weight: 700; margin-left: 2px; }
.status { width: 318px; margin: 1px 0 0; display: grid; grid-template-columns: 28px 11px 13px 11px 2px 12px 13px 11px 11px 10px 2px 11px 14px 9px 2px 12px 13px 13px 14px 6px 2px 12px 10px 13px 2px 13px 2px 14px 2px 13px 1px 13px; align-items: center; justify-items: center; background: #555; border: 1px solid #6a6a6a; padding-left: 1px; }
.status svg { width: 9px; height: 9px; }
.status svg.c { width: 5px; height: 5px; }
.status u { width: 1px; height: 13px; background: #444; }
.model { font-size: 7px; font-weight: 700; color: #dcdcdc; }
.scale { font-size: 6.500px; color: #ddd; font-weight: 700; }
.isolate { width: 11px; height: 11px; border-radius: 50%; background: #1d62b8; border: 1px solid #3f79c0; }

/* taskbar */
.taskbar { height: 24px; background: #04070c; position: relative; display: flex; align-items: center; }
.tb { width: 10px; height: 10px; flex: none; }
.t-win { margin-left: 9px; width: 9px; height: 9px; }
.t-search { margin-left: 18px; }
.t-view { margin-left: 16px; }
.t-edge { margin-left: 19px; width: 12px; height: 12px; }
.pinned { height: 24px; width: 24px; display: flex; align-items: center; justify-content: center; border-bottom: 1px solid #76b9ed; }
.pinned svg { width: 13px; height: 13px; }
.p-folder { margin-left: 9px; }
.t-calc { margin-left: 9px; width: 11px; height: 14px; }
.p-chrome { margin-left: 10px; }
.p-snip { margin-left: 4px; }
.p-snip svg { width: 14px; height: 14px; }
.t-acad { margin-left: 4px; width: 24px; height: 24px; background: #1f2429; border-bottom: 1px solid #76b9ed; display: flex; align-items: center; justify-content: center; }
.t-acad span { width: 14px; height: 14px; background: #f0e8e4; color: #c8202a; font: 700 12px/14px "Liberation Sans", sans-serif; text-align: center; }
.tray { flex: 1; display: flex; align-items: center; color: #d8d8d8; font-size: 6.800px; padding-left: 360px; }
.tr { width: 10px; height: 10px; margin-right: 4px; }
.r-up { margin-left: 4px; }
.eng { margin-left: 1px; width: 14px; flex: none; }
.clock { display: flex; flex-direction: column; align-items: center; width: 36px; margin-left: 4px; line-height: 10px; flex: none; }
.notif { position: relative; margin-left: 8px; width: 12px; height: 12px; flex: none; }
.notif svg { width: 10px; height: 10px; }
.notif b { position: absolute; right: -2px; bottom: -2px; width: 8px; height: 8px; border-radius: 50%; background: #222; color: #eee; font-size: 6px; line-height: 8px; text-align: center; font-weight: 400; }
```
